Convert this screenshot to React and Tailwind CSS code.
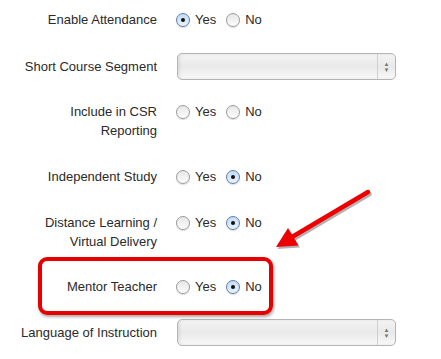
import React from "react";

function Radio({ checked }) {
  return (
    <span
      className={
        "relative inline-block w-[14px] h-[14px] rounded-full border shadow-[0_1px_1px_rgba(0,0,0,0.15)] " +
        (checked
          ? "border-[#5a7fae] bg-gradient-to-b from-[#c4dbf6] to-[#eaf3fd]"
          : "border-[#9c9c9c] bg-gradient-to-b from-[#e6e6e6] to-[#fdfdfd]")
      }
    >
      {checked && (
        <span className="absolute left-1/2 top-1/2 w-[4px] h-[4px] -translate-x-1/2 -translate-y-1/2 rounded-full bg-[#111]" />
      )}
    </span>
  );
}

function YesNo({ value }) {
  return (
    <div className="flex items-center h-[19px]">
      <Radio checked={value === "yes"} />
      <span className="ml-[5px]">Yes</span>
      <span className="ml-[10px] flex items-center">
        <Radio checked={value === "no"} />
      </span>
      <span className="ml-[5px]">No</span>
    </div>
  );
}

function Select() {
  return (
    <div className="ml-[1px] flex w-[219px] h-[27px] rounded-[5px] border border-[#b4b4b4] bg-gradient-to-b from-[#f4f4f4] via-[#e9e9e9] to-[#f9f9f9] shadow-[inset_2px_0_3px_rgba(0,0,0,0.08)]">
      <div className="flex-1" />
      <div className="w-[18px] border-l border-[#cfcfcf] flex flex-col items-center justify-center text-[#777] text-[6px] leading-[6px]">
        <span>▲</span>
        <span>▼</span>
      </div>
    </div>
  );
}

function Row({ label, children, className = "", center = false }) {
  return (
    <div className={"flex " + (center ? "items-center " : "items-start ") + className}>
      <div className="w-[157px] text-right">{label}</div>
      <div className="ml-[19px]">{children}</div>
    </div>
  );
}

export default function App() {
  return (
    <div
      className="relative w-[441px] h-[359px] bg-white overflow-hidden text-[13px] leading-[19px] text-[#2a2a2a]"
      style={{ fontFamily: '"Liberation Sans", Arial, sans-serif' }}
    >
      <div className="pt-[10px]">
        <Row label="Enable Attendance">
          <YesNo value="yes" />
        </Row>
        <Row label="Short Course Segment" center className="mt-[24px]">
          <Select />
        </Row>
        <Row label={<>Include in CSR<br />Reporting</>} className="mt-[22px]">
          <YesNo />
        </Row>
        <Row label="Independent Study" className="mt-[27px]">
          <YesNo value="no" />
        </Row>
        <Row label={<>Distance Learning /<br />Virtual Delivery</>} className="mt-[27px]">
          <YesNo value="no" />
        </Row>
        <Row label="Mentor Teacher" className="mt-[26px]">
          <YesNo value="no" />
        </Row>
        <Row label="Language of Instruction" center className="mt-[23px]">
          <Select />
        </Row>
      </div>

      {/* highlight box */}
      <div className="absolute left-[38px] top-[257px] w-[235px] h-[58px] rounded-[9px] border-[4px] border-[#e80000] shadow-[1px_2px_3px_rgba(0,0,0,0.35)]" />

      {/* arrow */}
      <svg className="absolute left-0 top-0" width="441" height="359">
        <g transform="translate(1.5,2)" opacity="0.3">
          <line x1="368" y1="192" x2="292" y2="237" stroke="#000" strokeWidth="4.5" strokeLinecap="round" />
          <polygon points="276,247 288,228 298.5,245.5" fill="#000" />
        </g>
        <line x1="368" y1="192" x2="292" y2="237" stroke="#ee0000" strokeWidth="4.5" strokeLinecap="round" />
        <polygon points="276,247 288,228 298.5,245.5" fill="#ee0000" />
      </svg>
    </div>
  );
}
